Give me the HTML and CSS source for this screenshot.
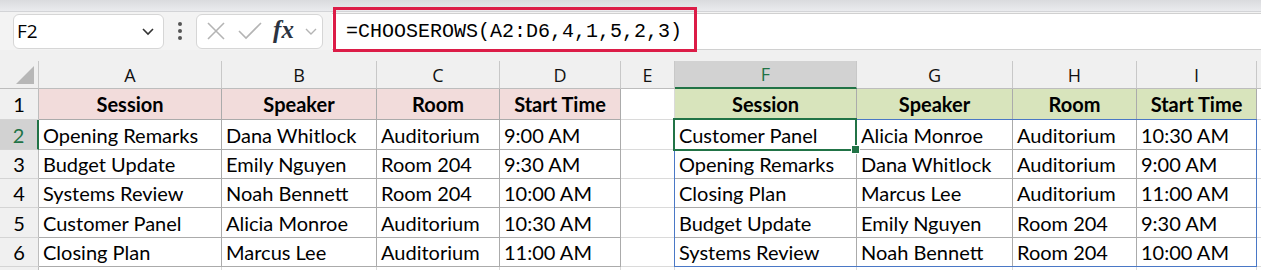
FILE: index.html
```
<!DOCTYPE html>
<html lang="en">
<head>
    <meta charset="UTF-8">
    <title>CHOOSEROWS</title>
    <link rel="stylesheet" href="styles.css">
</head>
<body>
    <div class="ribbon-edge"></div>

    <div class="formula-bar">
        <div class="name-box">
            <span>F2</span>
            <svg width="14" height="14" viewBox="0 0 14 14"><path d="M2 5 L7 10 L12 5" fill="none" stroke="#333" stroke-width="1.6"/></svg>
        </div>
        <div class="dots"><i></i><i></i><i></i></div>
        <div class="fx-box">
            <svg width="22" height="22" viewBox="0 0 22 22"><path d="M3 3 L19 19 M19 3 L3 19" stroke="#b4b4b4" stroke-width="1.6"/></svg>
            <svg width="26" height="22" viewBox="0 0 26 22"><path d="M2 11 L9 18 L24 3" fill="none" stroke="#b4b4b4" stroke-width="1.6"/></svg>
            <span class="fx">fx</span>
            <svg width="14" height="14" viewBox="0 0 14 14"><path d="M2 5 L7 10 L12 5" fill="none" stroke="#b4b4b4" stroke-width="1.4"/></svg>
        </div>
        <div class="formula-input">
            <span class="formula">=CHOOSEROWS(A2:D6,4,1,5,2,3)</span>
            <div class="highlight"></div>
        </div>
    </div>

    <div class="sheet">
        <div class="corner"><span></span></div>
        <div class="colhead">A</div>
        <div class="colhead">B</div>
        <div class="colhead">C</div>
        <div class="colhead">D</div>
        <div class="colhead">E</div>
        <div class="colhead active">F</div>
        <div class="colhead">G</div>
        <div class="colhead">H</div>
        <div class="colhead">I</div>
        <div class="colhead blank"></div>

        <div class="rowhead">1</div>
        <div class="cell th src">Session</div>
        <div class="cell th src">Speaker</div>
        <div class="cell th src">Room</div>
        <div class="cell th src">Start Time</div>
        <div class="cell empty"></div>
        <div class="cell th out">Session</div>
        <div class="cell th out">Speaker</div>
        <div class="cell th out">Room</div>
        <div class="cell th out">Start Time</div>
        <div class="cell empty"></div>

        <div class="rowhead active">2</div>
        <div class="cell">Opening Remarks</div>
        <div class="cell">Dana Whitlock</div>
        <div class="cell">Auditorium</div>
        <div class="cell">9:00 AM</div>
        <div class="cell empty"></div>
        <div class="cell">Customer Panel</div>
        <div class="cell">Alicia Monroe</div>
        <div class="cell">Auditorium</div>
        <div class="cell">10:30 AM</div>
        <div class="cell empty"></div>

        <div class="rowhead">3</div>
        <div class="cell">Budget Update</div>
        <div class="cell">Emily Nguyen</div>
        <div class="cell">Room 204</div>
        <div class="cell">9:30 AM</div>
        <div class="cell empty"></div>
        <div class="cell">Opening Remarks</div>
        <div class="cell">Dana Whitlock</div>
        <div class="cell">Auditorium</div>
        <div class="cell">9:00 AM</div>
        <div class="cell empty"></div>

        <div class="rowhead">4</div>
        <div class="cell">Systems Review</div>
        <div class="cell">Noah Bennett</div>
        <div class="cell">Room 204</div>
        <div class="cell">10:00 AM</div>
        <div class="cell empty"></div>
        <div class="cell">Closing Plan</div>
        <div class="cell">Marcus Lee</div>
        <div class="cell">Auditorium</div>
        <div class="cell">11:00 AM</div>
        <div class="cell empty"></div>

        <div class="rowhead">5</div>
        <div class="cell">Customer Panel</div>
        <div class="cell">Alicia Monroe</div>
        <div class="cell">Auditorium</div>
        <div class="cell">10:30 AM</div>
        <div class="cell empty"></div>
        <div class="cell">Budget Update</div>
        <div class="cell">Emily Nguyen</div>
        <div class="cell">Room 204</div>
        <div class="cell">9:30 AM</div>
        <div class="cell empty"></div>

        <div class="rowhead">6</div>
        <div class="cell">Closing Plan</div>
        <div class="cell">Marcus Lee</div>
        <div class="cell">Auditorium</div>
        <div class="cell">11:00 AM</div>
        <div class="cell empty"></div>
        <div class="cell">Systems Review</div>
        <div class="cell">Noah Bennett</div>
        <div class="cell">Room 204</div>
        <div class="cell">10:00 AM</div>
        <div class="cell empty"></div>

        <div class="rowhead"></div>
        <div class="cell empty"></div>
        <div class="cell empty"></div>
        <div class="cell empty"></div>
        <div class="cell empty"></div>
        <div class="cell empty"></div>
        <div class="cell empty"></div>
        <div class="cell empty"></div>
        <div class="cell empty"></div>
        <div class="cell empty"></div>
        <div class="cell empty"></div>

        <div class="spill-range"></div>
        <div class="selection"><span class="handle"></span></div>
    </div>
</body>
</html>
```

FILE: styles.css
```
body {
    margin: 0;
    background: #f0f0f0;
    font-family: "Open Sans", "Noto Sans", sans-serif;
    color: #000;
    overflow: hidden;
}
.ribbon-edge {
    height: 11px;
    background: linear-gradient(#dadbde, #eaebee);
    border-bottom: 1px solid #d3d4d7;
}
.formula-bar {
    display: flex;
    align-items: center;
    height: 38px;
    background: #f3f3f3;
}
.name-box {
    margin-left: 13px;
    width: 151px;
    height: 35px;
    box-sizing: border-box;
    background: #fff;
    border: 1px solid #d6d6d6;
    border-radius: 6px;
    display: flex;
    align-items: center;
    justify-content: space-between;
    padding: 0 8px 0 3px;
    font-size: 19px;
}
.dots {
    width: 32px;
    display: flex;
    flex-direction: column;
    align-items: center;
    gap: 3px;
}
.dots i {
    width: 4px;
    height: 4px;
    border-radius: 50%;
    background: #555;
}
.fx-box {
    width: 127px;
    height: 35px;
    box-sizing: border-box;
    background: #fff;
    border: 1px solid #d6d6d6;
    border-radius: 6px;
    display: flex;
    align-items: center;
    justify-content: space-between;
    padding: 0 4px 0 8px;
}
.fx {
    font-family: "Liberation Serif", serif;
    font-style: italic;
    font-weight: bold;
    font-size: 25px;
    color: #2b3340;
    margin-top: -3px;
}
.formula-input {
    flex: 1;
    margin-left: 9px;
    height: 37px;
    box-sizing: border-box;
    background: #fff;
    border-top: 1px solid #d0d0d0;
    border-bottom: 1px solid #d0d0d0;
    position: relative;
    display: flex;
    align-items: center;
    padding-left: 14px;
}
.formula {
    font-family: "Liberation Mono", monospace;
    font-size: 20px;
    color: #000;
}
.highlight {
    position: absolute;
    left: 1px;
    top: -7px;
    width: 364px;
    height: 45px;
    box-sizing: border-box;
    border: 3px solid #dc1c47;
}

.sheet {
    margin-top: 11px;
    display: grid;
    grid-template-columns: 39px 183px 155px 123px 121px 54px 182px 156px 124px 120px 1fr;
    grid-template-rows: 28px 31px 30px 29px 29px 30px 29px 30px;
    background: #fff;
    position: relative;
}
.corner {
    background: #f0f0f0;
    border-right: 1px solid #c8c8c8;
    border-bottom: 1px solid #bdbdbd;
    position: relative;
}
.corner span {
    position: absolute;
    right: 4px;
    bottom: 4px;
    width: 0;
    height: 0;
    border-left: 18px solid transparent;
    border-bottom: 18px solid #b7b7b7;
}
.colhead {
    background: #f0f0f0;
    border-right: 1px solid #c8c8c8;
    border-bottom: 1px solid #bdbdbd;
    display: flex;
    align-items: center;
    justify-content: center;
    font-size: 18px;
    color: #111;
}
.colhead.active {
    background: #d2d2d2;
    color: #217346;
    border-bottom: 2px solid #217346;
}
.colhead.blank {
    border-right: none;
}
.rowhead {
    background: #f0f0f0;
    border-right: 1px solid #bdbdbd;
    border-bottom: 1px solid #d4d4d4;
    display: flex;
    align-items: center;
    justify-content: center;
    font-family: "Lato", sans-serif;
    font-size: 20px;
}
.rowhead.active {
    background: #d2d2d2;
    color: #217346;
    border-right: 2px solid #217346;
}
.cell {
    border-right: 1px solid #ababab;
    border-bottom: 1px solid #ababab;
    font-family: "Lato", "Liberation Sans", sans-serif;
    font-size: 20px;
    display: flex;
    align-items: center;
    padding-left: 4px;
    white-space: nowrap;
    overflow: hidden;
}
.cell.empty {
    border-color: #dadada;
}
.cell.th {
    font-weight: bold;
    justify-content: center;
    padding-left: 0;
}
.src {
    background: #f2dcdb;
}
.out {
    background: #d8e4bc;
}
.spill-range {
    position: absolute;
    grid-column: 7 / 11;
    grid-row: 3 / 8;
    top: -1px;
    left: -1px;
    right: 0;
    bottom: 0;
    border: 1px solid #4a78c6;
    pointer-events: none;
}
.selection {
    position: absolute;
    grid-column: 7 / 8;
    grid-row: 3 / 4;
    top: -2px;
    left: -2px;
    right: 0;
    bottom: -1px;
    border: 2px solid #217346;
    pointer-events: none;
}
.handle {
    position: absolute;
    right: -5px;
    bottom: -5px;
    width: 7px;
    height: 7px;
    background: #217346;
    border: 1px solid #fff;
}
```
